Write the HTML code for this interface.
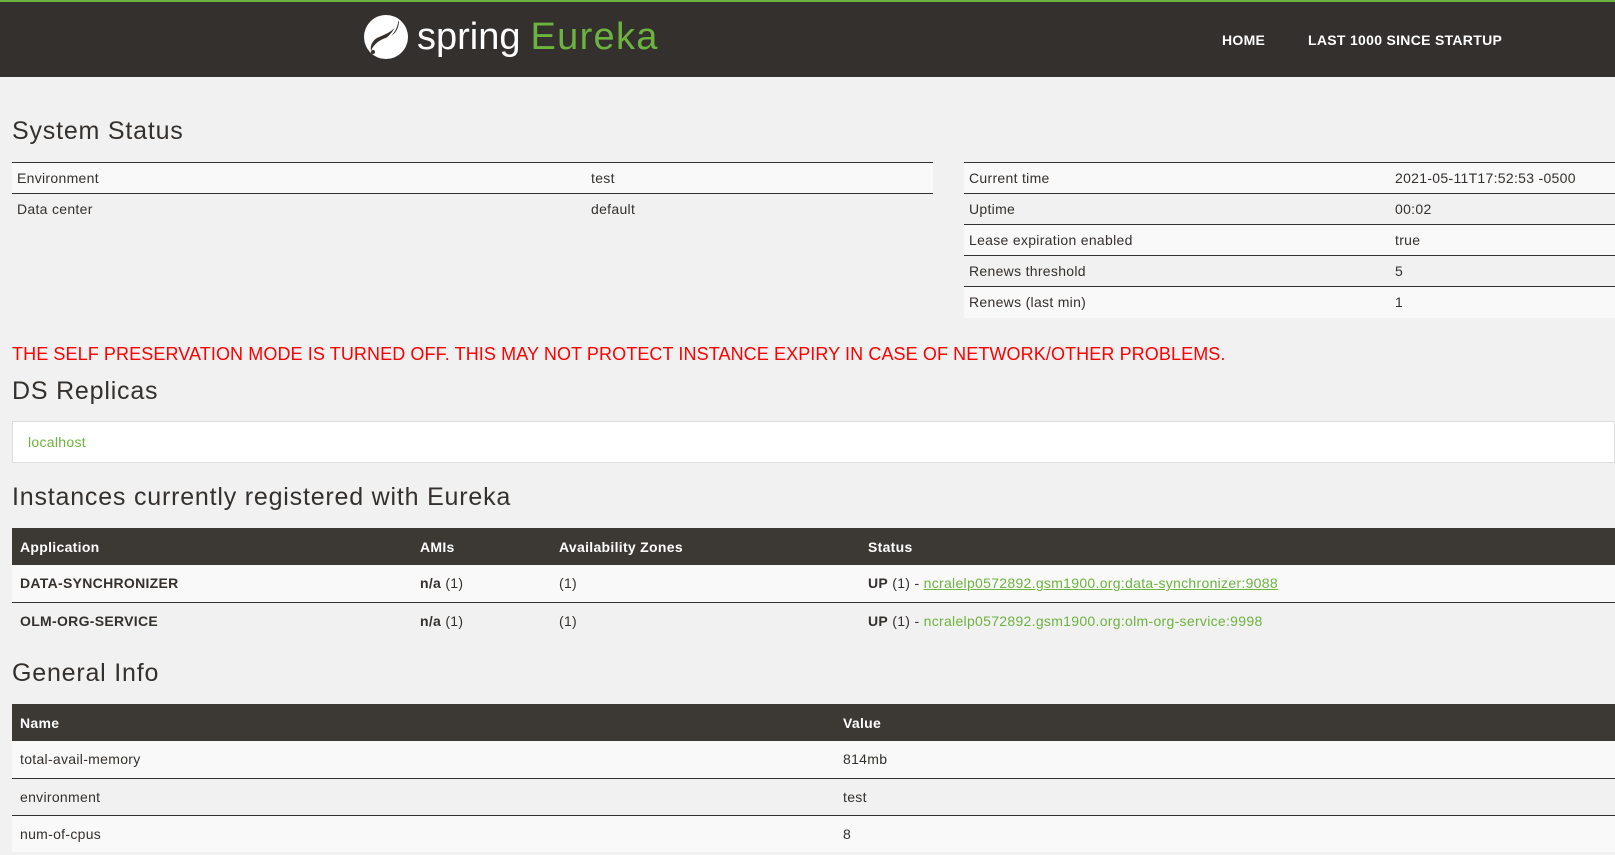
<!DOCTYPE html>
<html><head><meta charset="utf-8"><style>
*{box-sizing:border-box;margin:0;padding:0}
body{width:1615px;height:855px;overflow:hidden;background:#f1f1f1;font-family:"Liberation Sans",sans-serif;font-size:14px;color:#34302d;position:relative;letter-spacing:0.3px}
.nav{position:absolute;left:0;top:0;width:1615px;height:77px;background:#34302d;border-top:2px solid #6db33f}
.logo{position:absolute;left:363px;top:10px;height:50px;display:flex;align-items:center}
.logo .t{font-size:38px;color:#fff;margin-left:8px;letter-spacing:0px}
.logo .g{color:#6db33f;margin-left:10px;letter-spacing:1.3px}
.menu{position:absolute;top:30px;color:#fff;font-weight:bold;font-size:14px}
h2{position:absolute;left:12px;font-weight:normal;font-size:25px;color:#34302d;letter-spacing:0.8px}
table{position:absolute;border-collapse:collapse}
td,th{height:31px;padding:0 5px;text-align:left;vertical-align:middle;font-weight:normal;border-top:1px solid #34302d}
tr.o td{background:#f9f9f9}
.dt th{background:#3c3834;color:#fff;font-weight:bold;height:37px;border:none;padding:0 8px}
.dt td{height:37px;padding:0 8px;border-top:1px solid #34302d}
a{color:#6db33f;text-decoration:underline}
.red{position:absolute;left:12px;top:344px;color:#f00;font-size:18px;letter-spacing:0.1px}
.rep{position:absolute;left:12px;top:421px;width:1603px;height:42px;background:#fff;border:1px solid #ddd;padding:12px 15px;color:#6db33f}
</style></head><body>
<div class="nav">
 <div class="logo">
  <svg width="46" height="46" viewBox="0 0 46 46"><circle cx="23" cy="23" r="22" fill="#fff"/><path d="M36 6c-4 12-14 14-22 18-5 3-7 8-6 13 3-8 10-12 18-14 5-2 10-7 10-17z" fill="#34302d"/><path d="M34 9c-2 11-10 16-24 26" stroke="#fff" stroke-width="2" fill="none"/><circle cx="10" cy="38" r="2" fill="#34302d"/></svg>
  <span class="t">spring</span><span class="t g">Eureka</span>
 </div>
 <div class="menu" style="left:1222px">HOME</div>
 <div class="menu" style="left:1308px">LAST 1000 SINCE STARTUP</div>
</div>
<h2 style="top:117px">System Status</h2>
<table style="left:12px;top:162px;width:921px">
<tr class="o"><td style="width:574px">Environment</td><td>test</td></tr>
<tr><td>Data center</td><td>default</td></tr>
</table>
<table style="left:964px;top:162px;width:651px">
<tr class="o"><td style="width:426px">Current time</td><td>2021-05-11T17:52:53 -0500</td></tr>
<tr><td>Uptime</td><td>00:02</td></tr>
<tr class="o"><td>Lease expiration enabled</td><td>true</td></tr>
<tr><td>Renews threshold</td><td>5</td></tr>
<tr class="o"><td>Renews (last min)</td><td>1</td></tr>
</table>
<div class="red">THE SELF PRESERVATION MODE IS TURNED OFF. THIS MAY NOT PROTECT INSTANCE EXPIRY IN CASE OF NETWORK/OTHER PROBLEMS.</div>
<h2 style="top:377px">DS Replicas</h2>
<div class="rep">localhost</div>
<h2 style="top:483px">Instances currently registered with Eureka</h2>
<table class="dt" style="left:12px;top:528px;width:1603px">
<tr><th style="width:400px">Application</th><th style="width:139px">AMIs</th><th style="width:309px">Availability Zones</th><th>Status</th></tr>
<tr class="o"><td style="border-top:none"><b>DATA-SYNCHRONIZER</b></td><td style="border-top:none"><b>n/a</b> (1)</td><td style="border-top:none">(1)</td><td style="border-top:none"><b>UP</b> (1) - <a>ncralelp0572892.gsm1900.org:data-synchronizer:9088</a></td></tr>
<tr><td><b>OLM-ORG-SERVICE</b></td><td><b>n/a</b> (1)</td><td>(1)</td><td><b>UP</b> (1) - <span style="color:#6db33f">ncralelp0572892.gsm1900.org:olm-org-service:9998</span></td></tr>
</table>
<h2 style="top:659px">General Info</h2>
<table class="dt" style="left:12px;top:704px;width:1603px">
<tr><th style="width:823px">Name</th><th>Value</th></tr>
<tr class="o"><td style="border-top:none">total-avail-memory</td><td style="border-top:none">814mb</td></tr>
<tr><td>environment</td><td>test</td></tr>
<tr class="o"><td>num-of-cpus</td><td>8</td></tr>
</table>
</body></html>
